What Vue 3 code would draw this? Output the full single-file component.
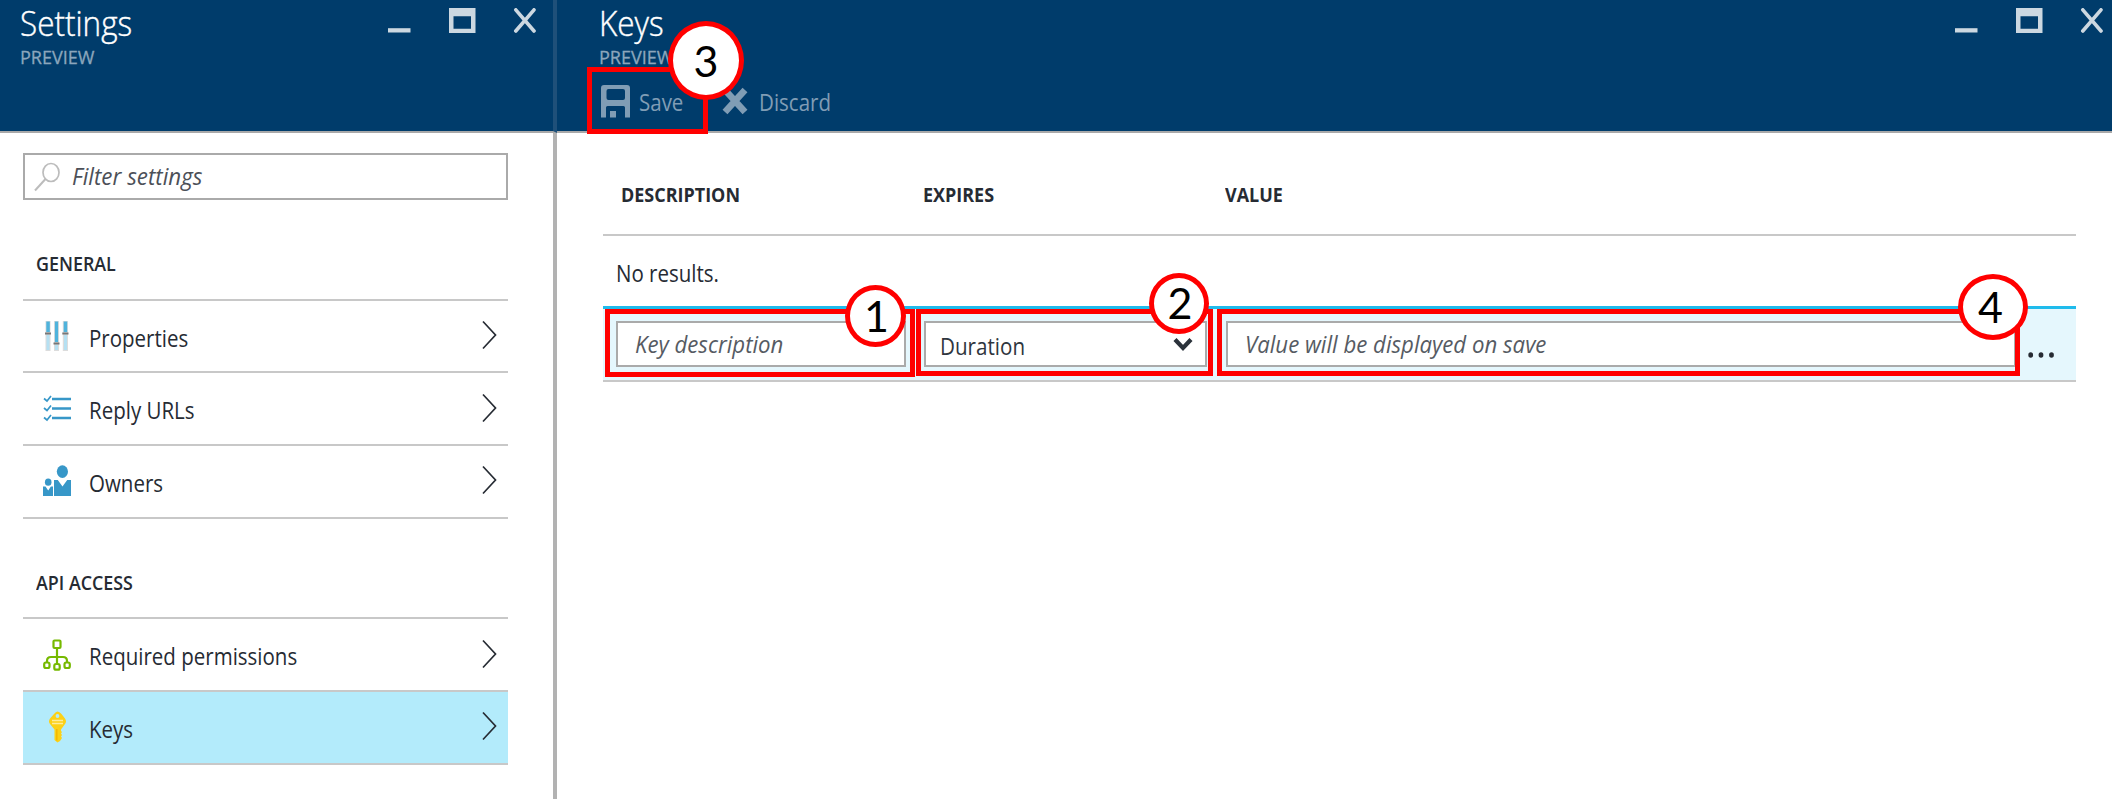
<script setup>
const groups = [
  {
    title: 'GENERAL',
    items: [
      { label: 'Properties', icon: 'sliders' },
      { label: 'Reply URLs', icon: 'checklist' },
      { label: 'Owners', icon: 'people' },
    ],
  },
  {
    title: 'API ACCESS',
    items: [
      { label: 'Required permissions', icon: 'tree' },
      { label: 'Keys', icon: 'key', active: true },
    ],
  },
]
const blades = ['settings', 'keys']
</script>

<template>
  <div class="portal">
    <section v-for="blade in blades" :key="blade" class="blade" :class="blade">
      <header class="bar">
        <div>
          <div class="title"><span class="t">{{ blade === 'settings' ? 'Settings' : 'Keys' }}</span></div>
          <div class="sub"><span class="t">PREVIEW</span></div>
          <div v-if="blade === 'keys'" class="tools">
            <svg class="save-icon" width="29" height="33" viewBox="0 0 29 33">
              <path fill="#809db5" fill-rule="evenodd" d="M3 0H26Q29 0 29 3V32.5H24V22.5Q24 21 22.500 21H6.500Q5 21 5 22.500V32.500H0V3Q0 0 3 0ZM7.500 4Q5.500 4 5.500 6V13Q5.500 15 7.500 15H22Q24 15 24 13V6Q24 4 22 4Z" />
              <path fill="#809db5" d="M9 26H15V32.500H9Z" />
            </svg>
            <span class="t save">Save</span>
            <svg class="discard-icon" width="26" height="28" viewBox="0 0 26 28">
              <path d="M3 3L23 25M23 3L3 25" stroke="#809db5" stroke-width="6.600" />
            </svg>
            <span class="t discard">Discard</span>
          </div>
        </div>
        <svg class="window" width="148" height="26" viewBox="0 0 148 26" fill="none">
          <path d="M0 20.200H22.500V24.500H0Z" fill="#ccd8e1" />
          <path d="M61 0H87.500V25H61ZM65.500 8.300V20.700H83V8.300Z" fill="#ccd8e1" fill-rule="evenodd" />
          <path d="M127.800 1.800L146 23M146 1.800L127.800 23" stroke="#ccd8e1" stroke-width="3.600" stroke-linecap="round" />
        </svg>
      </header>

      <div v-if="blade === 'settings'" class="menu">
        <div class="search">
          <svg width="28" height="32" viewBox="0 0 28 32" fill="none" stroke="#bcbcbc">
            <ellipse cx="18" cy="10.500" rx="8" ry="9" stroke-width="1.700" />
            <path d="M12.500 17L2 28.500" stroke-width="2" />
          </svg>
          <span class="t">Filter settings</span>
        </div>
        <template v-for="g in groups" :key="g.title">
          <h2><span class="t">{{ g.title }}</span></h2>
          <ul>
            <li v-for="i in g.items" :key="i.label" :class="{ active: i.active }">
              <svg class="glyph" width="28" height="32" viewBox="0 0 28 32">
                <g v-if="i.icon === 'sliders'">
                  <path d="M2.500 1H7.500V31H2.500ZM11 1H16V31H11ZM19.800 1H25V31H19.800Z" fill="#dcdcdc" />
                  <path d="M3.500 15H6.500V30H3.500ZM12 25H15V30H12ZM21 15H24V30H21Z" fill="#b5e0f2" />
                  <path d="M3.300 1.500H6.800V12H3.300ZM11.900 1.500H15.100V22H11.900ZM20.700 1.500H24.200V12H20.700Z" fill="#4fb3dc" />
                  <path d="M2 12.500H8V14.500H2ZM10.500 22.500H16.500V24.500H10.500ZM19.300 12.500H25.500V14.500H19.300Z" fill="#777" />
                </g>
                <g v-else-if="i.icon === 'checklist'" fill="none" stroke="#3797c8">
                  <path d="M9 6H28M9 15.500H28M9 25H28" stroke-width="2.600" />
                  <path d="M1 5.500L4 8L8 3M1 15L4 17.500L8 12.500M1 24.500L4 27L8 22" stroke-width="1.700" />
                </g>
                <g v-else-if="i.icon === 'people'" fill="#3797c8">
                  <ellipse cx="19.400" cy="6.600" rx="5.600" ry="6.300" />
                  <ellipse cx="5.200" cy="17.200" rx="3.300" ry="3.600" />
                  <path d="M11 15H14.800L19.500 21.500L24.200 15H28V31H11ZM0 21.500H2.500L5.200 25.500L7.900 21.500H10V31H0Z" />
                </g>
                <g v-else-if="i.icon === 'tree'" fill="none" stroke="#76b900" stroke-width="2.200">
                  <path d="M14 9V24M4 24V22Q4 18 8 18H20Q24 18 24 22V24" />
                  <rect x="10.500" y="1.500" width="7" height="7.500" rx="1" fill="#fff" />
                  <rect x="1.200" y="23.500" width="5.300" height="5.500" rx="1.800" fill="#fff" />
                  <rect x="11.300" y="25" width="5.400" height="5.700" rx="1.800" fill="#fff" />
                  <rect x="21.500" y="23.500" width="5.300" height="5.500" rx="1.800" fill="#fff" />
                </g>
                <g v-else>
                  <path d="M14.500 0.500Q16.500 0.500 18.500 3L22 7.500Q24 10.500 22 13L18 18.500V20L19 21L18 22.500L19 24L18 25.500L19 27L17 30L14.500 31.500L11.500 29V18.500L7 13Q5 10.500 7 7.500L11 3Q12.800 0.500 14.500 0.500Z" fill="#fcd116" />
                  <circle cx="14.500" cy="5" r="1.900" fill="#b3ebfb" />
                  <path d="M9 9.500H20M9 12.500H20" stroke="#fdec9b" stroke-width="1.500" />
                  <path d="M13.800 18V29.500" stroke="#f5b800" stroke-width="1.500" />
                </g>
              </svg>
              <span class="t">{{ i.label }}</span>
              <svg class="chev" width="15" height="30" viewBox="0 0 15 30" fill="none">
                <path d="M1 1.500L13.500 15L1 28.500" stroke="#262b33" stroke-width="1.700" />
              </svg>
            </li>
          </ul>
        </template>
      </div>

      <div v-else class="table">
        <div class="row head">
          <span class="t">DESCRIPTION</span><span class="t">EXPIRES</span><span class="t">VALUE</span>
        </div>
        <div class="empty"><span class="t">No results.</span></div>
        <div class="row edit">
          <div class="field desc"><span class="t">Key description</span></div>
          <div class="field dur">
            <span class="t">Duration</span>
            <svg width="20" height="15" viewBox="0 0 20 15" fill="none">
              <path d="M2 2.500L10 11L18 2.500" stroke="#2b323b" stroke-width="4.200" />
            </svg>
          </div>
          <div class="field val"><span class="t">Value will be displayed on save</span></div>
          <svg class="dots" width="26" height="8" viewBox="0 0 26 8" fill="#262b33">
            <ellipse cx="2.700" cy="4" rx="2.400" ry="2.700" />
            <ellipse cx="13" cy="4" rx="2.400" ry="2.700" />
            <ellipse cx="23.500" cy="4" rx="2.400" ry="2.700" />
          </svg>
        </div>
      </div>
    </section>

    <div class="frame f1"></div>
    <div class="frame f2"></div>
    <div class="frame f3"></div>
    <div class="frame f4"></div>
    <div class="step s1"><span>1</span></div>
    <div class="step s2"><span>2</span></div>
    <div class="step s3"><span>3</span></div>
    <div class="step s4"><span>4</span></div>
  </div>
</template>

<style>
body { background: #fff; overflow: hidden; }
</style>

<style scoped>
* { box-sizing: border-box; }
.portal {
  position: relative;
  display: flex;
  width: 2112px;
  height: 799px;
  overflow: hidden;
  font-family: "Open Sans", "Noto Sans", sans-serif;
  font-size: 23.3px;
  line-height: 30px;
  color: #262b33;
}
.t { display: inline-block; white-space: nowrap; transform: scaleX(0.88); transform-origin: 0 50%; }
svg { display: block; flex: none; }
.settings { width: 557px; border-right: 4px solid #b2b2b2; }
.keys { flex: 1; }
.bar {
  display: flex;
  justify-content: space-between;
  height: 133px;
  background: #003c6b;
  border-bottom: 2px solid #a9a9a9;
}
.settings .bar { width: 557px; padding: 0 17px 0 20px; border-right: 4px solid #1f5079; }
.keys .bar { padding: 0 9px 0 42px; }
.window { margin-top: 8px; }
.title { padding-top: 1px; height: 45px; line-height: 44px; font-size: 34px; font-weight: 300; color: #fff; -webkit-text-stroke: 0.4px #fff; }
.title .t { transform: scaleX(0.925); }
.sub { margin-top: 2px; height: 20px; line-height: 20px; font-size: 19px; color: #8ba6bc; -webkit-text-stroke: 0.3px #8ba6bc; }
.sub .t { transform: scaleX(0.95); }
.tools { display: flex; align-items: center; height: 30px; margin: 19px 0 0 2px; color: #809db5; }
.tools .t { margin-top: 2px; }
.save { width: 83px; margin-left: 9px; }
.discard { margin-left: 11px; }

.menu { padding: 20px 0 0 23px; width: 508px; }
.search { display: flex; height: 47px; padding: 7px 0 0 8px; border: 2px solid #aaa; line-height: 28px; font-style: italic; color: #4c5058; }
.search .t { margin-left: 11px; transform: scaleX(0.96); }
h2 { height: 98.8px; margin: 0; padding: 54px 0 0 13px; font-size: 19px; line-height: 20px; font-weight: 600; }
h2 .t { transform: scaleX(0.94); }
ul { list-style: none; margin: 0; padding: 0; border-top: 2px solid #c8c8c8; }
li { display: flex; align-items: center; height: 72.6px; padding: 0 11px 0 20px; border-bottom: 2px solid #c8c8c8; }
li .t { margin: 3px 0 0 18px; }
li.active { background: #b3ebfb; }
.chev { margin-left: auto; margin-top: -2px; }

.table { width: 1473px; margin-left: 46px; }
.row { display: grid; grid-template-columns: 302px 302px 1fr; }
.head { height: 103px; padding: 23px 0 0 18px; align-items: center; border-bottom: 2px solid #c8c8c8; font-size: 19px; line-height: 20px; font-weight: 700; }
.head .t { transform: scaleX(0.945); }
.empty { display: flex; align-items: center; height: 70px; padding: 3px 0 0 13px; }
.edit { grid-template-columns: 308px 302px 790px 1fr; height: 76px; padding: 12px 0 0 13px; background: #e5f7fd; border-top: 3px solid #1fbbec; border-bottom: 2px solid #c8c8c8; }
.field { display: flex; align-items: center; height: 46px; background: #fff; border: 2px solid #aaa; font-style: italic; color: #565b63; }
.field .t { transform: scaleX(0.953); }
.desc { width: 290px; padding: 0 0 1px 17px; }
.dur { width: 283px; padding: 3px 12px 0 14px; justify-content: space-between; font-style: normal; color: #2f363e; }
.dur .t { transform: scaleX(0.885); }
.dur svg { margin-top: -2px; }
.val { padding: 0 0 1px 17px; }
.dots { margin: 30px 0 0 12px; }

.frame { position: absolute; border: 5px solid #f00; }
.f1 { left: 605px; top: 309px; width: 310px; height: 68px; }
.f2 { left: 916px; top: 309px; width: 297px; height: 67px; }
.f3 { left: 1217px; top: 309px; width: 803px; height: 67px; }
.f4 { left: 587px; top: 67px; width: 121px; height: 67px; }
.step {
  position: absolute;
  display: flex;
  align-items: center;
  justify-content: center;
  border: 5px solid #f00;
  border-radius: 50%;
  background: #fff;
  color: #000;
  font: 43px/50px Lato, sans-serif;
}
.s1 { left: 845px; top: 285px; width: 61px; height: 62px; padding-left: 2px; }
.s2 { left: 1149px; top: 273px; width: 60px; height: 61px; padding: 0 0 2px 2px; }
.s3 { left: 668px; top: 21px; width: 76px; height: 79px; }
.s4 { left: 1958px; top: 274px; width: 70px; height: 66px; padding-right: 5px; }
</style>
